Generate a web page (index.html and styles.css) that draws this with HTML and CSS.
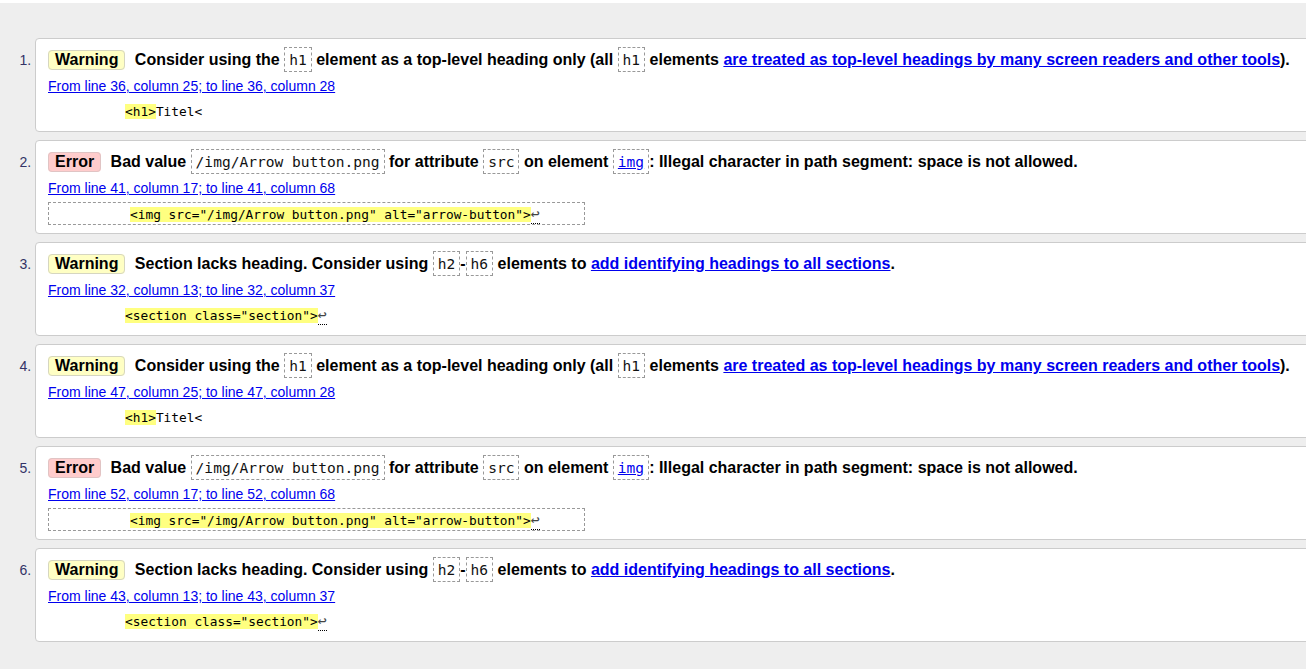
FILE: index.html
```html
<!DOCTYPE html>
<html lang="en">
<head>
<meta charset="utf-8">
<title>Validation results</title>
<link rel="stylesheet" href="styles.css">
</head>
<body>
<div class="results">
<ol class="messages">
  <li class="msg">
    <p class="message"><strong class="badge badge-warning">Warning</strong> <span>Consider using the <code class="chip">h1</code> element as a top-level heading only (all <code class="chip">h1</code> elements <a href="#">are treated as top-level headings by many screen readers and other tools</a>).</span></p>
    <p class="location"><a href="#">From line 36, column 25; to line 36, column 28</a></p>
    <p class="extract"><code>          <b class="hl">&lt;h1&gt;</b>Titel&lt;</code></p>
  </li>
  <li class="msg">
    <p class="message"><strong class="badge badge-error">Error</strong> <span>Bad value <code class="chip">/img/Arrow button.png</code> for attribute <code class="chip">src</code> on element <code class="chip"><a href="#">img</a></code>: Illegal character in path segment: space is not allowed.</span></p>
    <p class="location"><a href="#">From line 41, column 17; to line 41, column 68</a></p>
    <p class="extract boxed"><code>          <b class="hl">&lt;img src="/img/Arrow button.png" alt="arrow-button"&gt;</b><span class="lf" title="Line break">↩</span></code></p>
  </li>
  <li class="msg">
    <p class="message"><strong class="badge badge-warning">Warning</strong> <span>Section lacks heading. Consider using <code class="chip">h2</code>-<code class="chip">h6</code> elements to <a href="#">add identifying headings to all sections</a>.</span></p>
    <p class="location"><a href="#">From line 32, column 13; to line 32, column 37</a></p>
    <p class="extract"><code>          <b class="hl">&lt;section class="section"&gt;</b><span class="lf" title="Line break">↩</span></code></p>
  </li>
  <li class="msg">
    <p class="message"><strong class="badge badge-warning">Warning</strong> <span>Consider using the <code class="chip">h1</code> element as a top-level heading only (all <code class="chip">h1</code> elements <a href="#">are treated as top-level headings by many screen readers and other tools</a>).</span></p>
    <p class="location"><a href="#">From line 47, column 25; to line 47, column 28</a></p>
    <p class="extract"><code>          <b class="hl">&lt;h1&gt;</b>Titel&lt;</code></p>
  </li>
  <li class="msg">
    <p class="message"><strong class="badge badge-error">Error</strong> <span>Bad value <code class="chip">/img/Arrow button.png</code> for attribute <code class="chip">src</code> on element <code class="chip"><a href="#">img</a></code>: Illegal character in path segment: space is not allowed.</span></p>
    <p class="location"><a href="#">From line 52, column 17; to line 52, column 68</a></p>
    <p class="extract boxed"><code>          <b class="hl">&lt;img src="/img/Arrow button.png" alt="arrow-button"&gt;</b><span class="lf" title="Line break">↩</span></code></p>
  </li>
  <li class="msg">
    <p class="message"><strong class="badge badge-warning">Warning</strong> <span>Section lacks heading. Consider using <code class="chip">h2</code>-<code class="chip">h6</code> elements to <a href="#">add identifying headings to all sections</a>.</span></p>
    <p class="location"><a href="#">From line 43, column 13; to line 43, column 37</a></p>
    <p class="extract"><code>          <b class="hl">&lt;section class="section"&gt;</b><span class="lf" title="Line break">↩</span></code></p>
  </li>
</ol>
</div>
</body>
</html>
```
FILE: styles.css
```css
html, body {
  margin: 0;
  padding: 0;
  background: #fff;
}

body {
  font-family: "Liberation Sans", Arial, sans-serif;
  color: #000;
  overflow: hidden;
}

.results {
  margin-top: 3px;
  background: #eee;
  min-height: 666px;
  overflow: hidden;
}

.messages {
  margin: 0;
  padding: 35px 0 20px 35px;
}

.msg {
  margin: 0 -60px 8px 0;
  padding: 10px 12px 11px;
  border: 1px solid #ccc;
  border-radius: 4px;
  background: #fff;
  font-size: 14px;
  white-space: nowrap;
}

.msg::marker {
  color: #336;
  font-size: 14px;
}

.message {
  margin: 0;
  font-size: 16px;
  line-height: 21px;
  font-weight: bold;
}

.badge {
  display: inline;
  margin-right: 5px;
  padding: 0 6px 1px;
  border: 1px solid #d6d6c0;
  border-radius: 4px;
  font-weight: bold;
}

.badge-warning {
  background: #ffffc4;
}

.badge-error {
  background: #ffcccc;
  border-color: #e0c4c4;
}

.message a {
  color: #0000ee;
  text-decoration: underline;
}

.chip {
  font-family: "DejaVu Sans Mono", "Liberation Mono", monospace;
  font-size: 14.55px;
  font-weight: normal;
  line-height: 1;
  padding: 3px 4px;
  border: 1px dashed #999;
  color: #111;
}

.chip a {
  color: #0000ee;
}

.location {
  margin: 8px 0 0;
  font-size: 14px;
  line-height: 16px;
}

.location a {
  color: #0000ee;
  text-decoration: underline;
}

.extract {
  margin: 9px 0 0;
  line-height: 17px;
}

.extract code {
  font-family: "DejaVu Sans Mono", "Liberation Mono", monospace;
  font-size: 12.8px;
  white-space: pre;
  color: #000;
}

.extract.boxed {
  margin: 6px 0 -3px;
  line-height: 15px;
}

.extract.boxed code {
  display: block;
  width: fit-content;
  padding: 4px 44px 2px 4px;
  border: 1px dashed #999;
}

.hl {
  font-weight: normal;
  background: #ffff80;
}

.lf {
  font-size: 15px;
  line-height: 1;
  color: #444;
  border-bottom: 1px dotted #000;
}
```
